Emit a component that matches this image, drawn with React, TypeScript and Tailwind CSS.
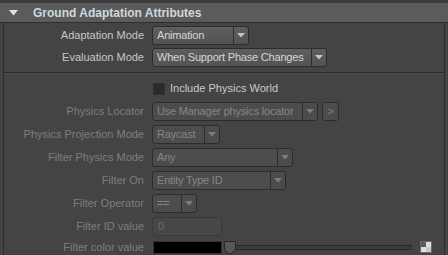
import React from 'react';

const font = { fontFamily: '"Liberation Sans", Arial, sans-serif' };

const Arrow: React.FC<{ dim?: boolean }> = ({ dim }) => (
  <svg width="8" height="5" viewBox="0 0 8 5">
    <path d="M0 0 L8 0 L4 4.5 Z" fill={dim ? '#7c7c7c' : '#c4c4c4'} />
  </svg>
);

interface DropProps {
  value: string;
  width: number;
  dim?: boolean;
}

const Dropdown: React.FC<DropProps> = ({ value, width, dim }) => (
  <div
    className={`flex h-[19px] rounded-[3px] border border-[#2c2c2c] ${
      dim ? 'bg-[#4c4c4c] text-[#868686]' : 'bg-gradient-to-b from-[#5e5e5e] to-[#535353] text-[#d6d6d6]'
    }`}
    style={{ width }}
  >
    <div className="flex-1 truncate pl-[4px] leading-[17px] tracking-[-0.2px]">{value}</div>
    <div className="flex w-[15px] items-center justify-center border-l border-[#2c2c2c]">
      <Arrow dim={dim} />
    </div>
  </div>
);

const Row: React.FC<{ label: string; dim?: boolean; children: React.ReactNode; className?: string }> = ({
  label,
  dim,
  children,
  className = '',
}) => (
  <div className={`flex items-center ${className}`}>
    <div className={`w-[141px] pr-[1px] text-right ${dim ? 'text-[#7e7e7e]' : 'text-[#c8c8c8]'}`}>{label}</div>
    <div className="ml-[7px] flex items-center">{children}</div>
  </div>
);

export default function App() {
  return (
    <div className="h-[255px] w-[448px] overflow-hidden bg-[#444444] text-[11px]" style={font}>
      {/* section header */}
      <div className="h-[3px] bg-[#3d3d3d]" />
      <div className="flex h-[19px] items-center bg-[#5b5b5b] pl-[9px]">
        <svg width="9" height="6" viewBox="0 0 9 6">
          <path d="M0 0 L9 0 L4.5 5.5 Z" fill="#e0e0e0" />
        </svg>
        <span className="ml-[15px] text-[12px] font-bold text-[#cfd7de]">Ground Adaptation Attributes</span>
      </div>
      <div className="h-[1px] bg-[#2e2e2e]" />

      <div className="mx-[3px] h-[232px] border-x border-[#2e2e2e]">
        <div className="flex flex-col gap-[3px] pt-[3px]">
          <Row label="Adaptation Mode" className="h-[19px]">
            <Dropdown value="Animation" width={97} />
          </Row>
          <Row label="Evaluation Mode" className="h-[19px]">
            <Dropdown value="When Support Phase Changes" width={175} />
          </Row>
        </div>

        <div className="mt-[5px] h-[1px] -mx-[1px] bg-[#2e2e2e]" />
        <div className="h-[1px] bg-[#4c4c4c]" />

        <div className="flex flex-col">
          <div className="mt-[8px] flex h-[13px] items-center pl-[149px]">
            <div className="h-[12px] w-[12px] rounded-[1px] border border-[#2f2f2f] bg-[#2a2a2a]" />
            <span className="ml-[5px] text-[#cacaca]">Include Physics World</span>
          </div>

          <div className="mt-[7px] flex flex-col gap-[4px]">
            <Row label="Physics Locator" dim className="h-[19px]">
              <Dropdown value="Use Manager physics locator" width={166} dim />
              <div className="ml-[4px] flex h-[19px] w-[17px] items-center justify-center rounded-[3px] border border-[#2c2c2c] bg-[#4c4c4c] text-[#7e7e7e]">
                &gt;
              </div>
            </Row>
            <Row label="Physics Projection Mode" dim className="h-[19px]">
              <Dropdown value="Raycast" width={68} dim />
            </Row>
            <Row label="Filter Physics Mode" dim className="h-[19px]">
              <Dropdown value="Any" width={141} dim />
            </Row>
            <Row label="Filter On" dim className="h-[19px]">
              <Dropdown value="Entity Type ID" width={134} dim />
            </Row>
            <Row label="Filter Operator" dim className="h-[19px]">
              <Dropdown value="==" width={45} dim />
            </Row>
            <Row label="Filter ID value" dim className="h-[19px]">
              <div className="h-[19px] w-[70px] rounded-[3px] border border-[#3a3a3a] bg-[#474747] pl-[5px] leading-[17px] text-[#6e6e6e]">
                0
              </div>
            </Row>
            <Row label="Filter color value" dim className="h-[14px]">
              <div className="ml-[1px] h-[13px] w-[69px] border border-[#333] bg-black" />
              <div className="relative ml-[2px] flex h-[13px] w-[188px] items-center">
                <div className="ml-[4px] h-[5px] flex-1 rounded-[2px] border border-[#2a2a2a] bg-[#3c3c3c]" />
                <svg className="absolute left-0 top-0" width="12" height="14" viewBox="0 0 12 14">
                  <path d="M0.5 0.5 H11.5 V9 L6 13.5 L0.5 9 Z" fill="#575757" stroke="#262626" />
                </svg>
              </div>
              <div className="ml-[8px] grid h-[12px] w-[12px] grid-cols-2 border border-[#6a6a6a]">
                <div className="bg-[#5a5a5a]" />
                <div className="bg-[#dedede]" />
                <div className="bg-[#dedede]" />
                <div className="bg-[#c8c8c8]" />
              </div>
            </Row>
          </div>
        </div>
      </div>
    </div>
  );
}
